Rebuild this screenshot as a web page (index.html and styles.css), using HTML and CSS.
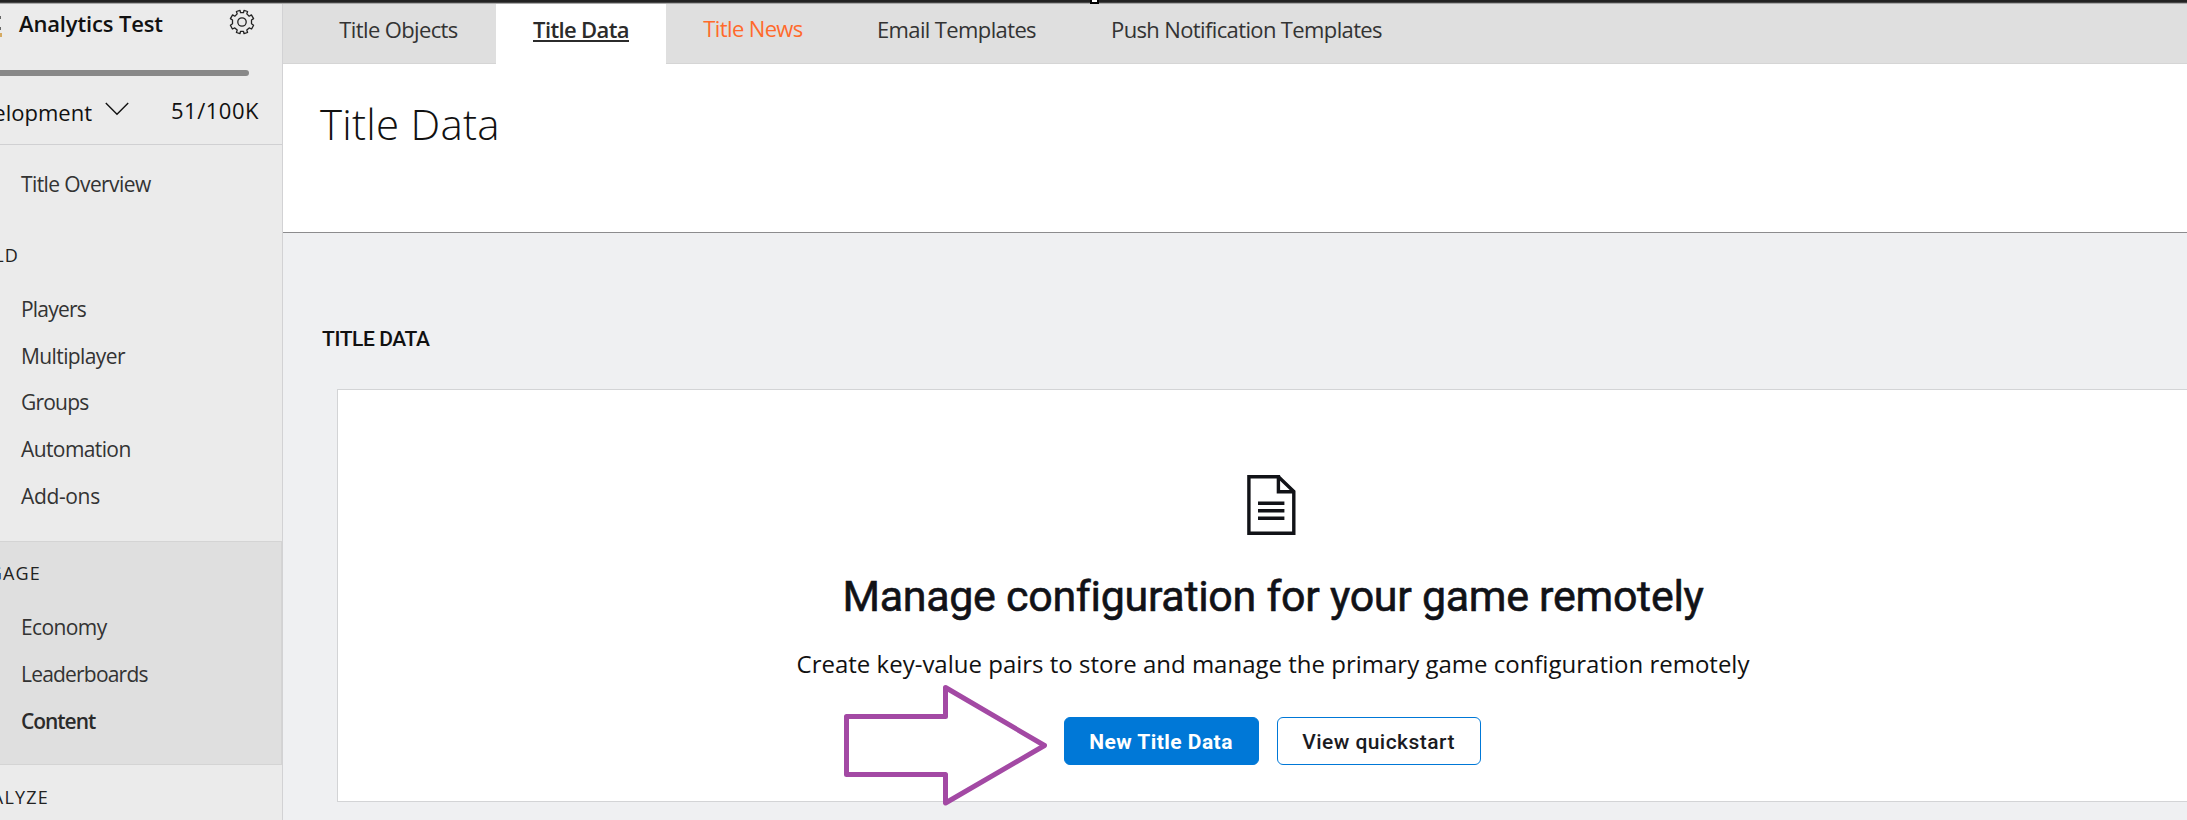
FILE: index.html
```html
<!DOCTYPE html>
<html lang="en">
<head>
<meta charset="utf-8">
<title>Title Data</title>
<link rel="stylesheet" href="styles.css">
</head>
<body>
<div class="window-edge"><span class="handle"></span></div>
<div class="app">
  <aside class="sidebar">
    <div class="game">
      <svg class="game-logo" width="2" height="40" viewBox="0 0 2 40"><path fill="#666" d="M0 12h1v3H0zM0 23h1v3H0z"/><path fill="#d5aa62" d="M0 29h2v4H0z"/></svg>
      <span class="game-name">Analytics Test</span>
      <svg class="gear" width="26" height="26" viewBox="0 0 26 26" fill="none" stroke="#222" stroke-width="1.3" stroke-linejoin="round"><path d="M11 1.3L11.5 3.7H14.5L15 1.3L18.6 2.5L17.8 4.9L20.2 7.2L22.4 5.9L24.6 9.6L22.5 11V14.8L24.6 16.2L22.6 20L20.2 18.9L17.8 21.1L18.6 23.5L15 24.7L14.5 22.3H11.5L11 24.7L7.4 23.5L8.2 21.1L5.8 18.9L3.4 20L1.4 16.2L3.5 14.8V11L1.4 9.6L3.6 5.9L5.8 7.2L8.2 4.9L7.4 2.5Z"/><circle cx="13" cy="13" r="4.2"/></svg>
    </div>
    <div class="usage"></div>
    <div class="env">
      <span class="env-name">Development</span>
      <svg class="chevron" width="24" height="14" viewBox="0 0 24 14" fill="none" stroke="#111" stroke-width="1.4"><path d="M.8 1 12 12.2 23.2 1"/></svg>
      <span class="quota">51/100K</span>
    </div>
    <nav class="menu">
      <a class="item overview">Title Overview</a>
      <section class="group build">
        <h2 class="group-title clip-build">BUILD</h2>
        <a class="item tight">Players</a>
        <a class="item">Multiplayer</a>
        <a class="item tight">Groups</a>
        <a class="item">Automation</a>
        <a class="item loose">Add-ons</a>
      </section>
      <section class="group engage">
        <h2 class="group-title clip-engage">ENGAGE</h2>
        <a class="item">Economy</a>
        <a class="item tight">Leaderboards</a>
        <a class="item current">Content</a>
      </section>
      <section class="group analyze">
        <h2 class="group-title clip-analyze">ANALYZE</h2>
      </section>
    </nav>
  </aside>
  <main class="main">
    <nav class="tabs">
      <a class="tab objects">Title Objects</a>
      <a class="tab active"><span class="underlined">Title Data</span></a>
      <a class="tab news">Title News</a>
      <a class="tab email">Email Templates</a>
      <a class="tab push">Push Notification Templates</a>
    </nav>
    <header class="page-head"><h1 class="page-title">Title Data</h1></header>
    <div class="content">
      <h2 class="section-title">TITLE DATA</h2>
      <section class="card">
        <svg class="doc" width="49" height="60" viewBox="0 0 49 60" fill="none" stroke="#111217" stroke-width="3.4"><path d="M1.9 1.7H31.4L46.8 16.5V58.3H1.9Z"/><path d="M31.4 0V16.7H48"/><path d="M11 28.3H37.4M11 35.7H37.4M11 43.3H37.4"/></svg>
        <h3 class="headline">Manage configuration for your game remotely</h3>
        <p class="lead">Create key-value pairs to store and manage the primary game configuration remotely</p>
        <div class="actions">
          <button class="btn primary">New Title Data</button>
          <button class="btn secondary">View quickstart</button>
        </div>
        <svg class="arrow" width="204" height="122" viewBox="843 684 204 122"><path d="M846.5 716.5H945.5V687.5L1044.5 745.5L945.5 803V774.5H846.5Z" fill="none" stroke="#a349a4" stroke-width="5" stroke-linejoin="round"/></svg>
      </section>
    </div>
  </main>
</div>
</body>
</html>
```

FILE: styles.css
```css
* { box-sizing: border-box; }
body {
  margin: 0;
  height: 820px;
  overflow: hidden;
  font-family: "Open Sans", "Noto Sans", sans-serif;
  color: #111;
  background: #eff0f2;
}
h1, h2, h3, p { margin: 0; font-weight: 400; }

.window-edge {
  position: relative;
  height: 4px;
  background: linear-gradient(#222 0 2px, #444 2px 3px, #aaa 3px 4px);
}
.handle {
  position: absolute;
  left: 1090px;
  top: 0;
  width: 9px;
  height: 4px;
  background: #fff;
  border: solid #000;
  border-width: 0 2px 2px;
}
.app { display: flex; height: 816px; }

.sidebar {
  flex: none;
  width: 283px;
  overflow: hidden;
  background: #ebebeb;
  border-right: 1px solid #d2d2d4;
}
.game { display: flex; height: 40px; }
.game-logo { flex: none; }
.game-name {
  width: 227px;
  padding-left: 17px;
  font-size: 22px;
  font-weight: 600;
  line-height: 39px;
  letter-spacing: -0.14px;
}
.gear { flex: none; margin-top: 5px; }
.usage {
  width: 249px;
  height: 6px;
  margin-top: 26px;
  border-radius: 0 3px 3px 0;
  background: #888;
}
.env {
  display: flex;
  height: 69px;
  font-size: 22px;
  border-bottom: 1px solid #d0d0d2;
}
.env-name {
  display: flex;
  flex: none;
  justify-content: flex-end;
  width: 92px;
  line-height: 72px;
}
.chevron { flex: none; margin: 26px 0 0 13px; }
.quota { margin-left: 42px; line-height: 69px; letter-spacing: 0.5px; }

.item {
  display: block;
  height: 46.75px;
  padding-left: 21px;
  font-size: 21px;
  line-height: 46px;
  letter-spacing: -0.6px;
  color: #333;
}
.item.tight { letter-spacing: -0.8px; }
.item.loose { letter-spacing: -0.35px; }
.item.current { font-weight: 600; letter-spacing: -1.04px; color: #2b2b2b; }
.overview { margin-top: 16px; }
.group { padding-top: 16px; }
.group-title {
  display: flex;
  justify-content: flex-end;
  height: 30px;
  margin-bottom: 16px;
  font-size: 18px;
  line-height: 31px;
  letter-spacing: 1.2px;
  color: #222;
}
.clip-build { width: 19px; }
.clip-engage { width: 41px; }
.clip-analyze { width: 49px; }
.build { height: 333.25px; padding-top: 32px; }
.analyze { padding-top: 17px; }
.engage {
  height: 224px;
  border: 1px solid #d4d4d4;
  border-width: 1px 1px 1px 0;
  background: #dfdfdf;
}

.main { flex: 1; min-width: 0; }
.tabs {
  display: flex;
  height: 60px;
  background: #dfdfdf;
  border-bottom: 1px solid #d5d5d5;
  font-size: 22px;
  line-height: 50px;
  letter-spacing: -0.63px;
  text-align: center;
  color: #333;
}
.tab { display: block; height: 60px; }
.objects { width: 213px; padding-left: 18px; }
.active { width: 170px; background: #fff; color: #2b2b2b; font-weight: 600; }
.underlined { display: inline-block; height: 37px; line-height: 48px; border-bottom: 2px solid #2b2b2b; }
.news { width: 174px; line-height: 48px; color: #ff6a2b; }
.email { width: 233px; }
.push { width: 347px; }

.page-head {
  height: 169px;
  padding: 31px 0 0 37px;
  background: #fff;
  border-bottom: 1px solid #8c8c8e;
}
.page-title { font-size: 42px; font-weight: 300; line-height: 58px; letter-spacing: 0.25px; }
.content { padding: 86px 0 0 37px; }
.section-title {
  height: 41px;
  padding-left: 2px;
  font: 500 21px/41px Roboto, sans-serif;
  letter-spacing: -0.4px;
}
.card {
  position: relative;
  display: flex;
  flex-direction: column;
  align-items: center;
  width: 1872px;
  height: 413px;
  margin: 29px 0 0 17px;
  background: #fff;
  border: 1px solid #d3d4d6;
}
.doc { margin: 85px 4px 0 0; }
.headline {
  height: 60px;
  margin-top: 31px;
  font: 400 43px/60px Roboto, sans-serif;
  letter-spacing: -0.3px;
  color: #111217;
  -webkit-text-stroke: 0.6px #111217;
}
.lead { margin-top: 18px; font-size: 24px; line-height: 40px; white-space: nowrap; }
.actions { display: flex; gap: 18px; margin: 33px 2px 0 0; }
.btn {
  height: 48px;
  padding: 1px 0 0;
  font: 500 21px/46px Roboto, sans-serif;
  letter-spacing: 0.46px;
  border: 1px solid #0078d7;
  border-radius: 6px;
}
.primary { width: 195px; background: #0078d7; color: #fff; font-weight: 700; }
.secondary { width: 204px; background: #fff; color: #1b1b1f; }
.arrow { position: absolute; left: 505px; top: 294px; }
```
